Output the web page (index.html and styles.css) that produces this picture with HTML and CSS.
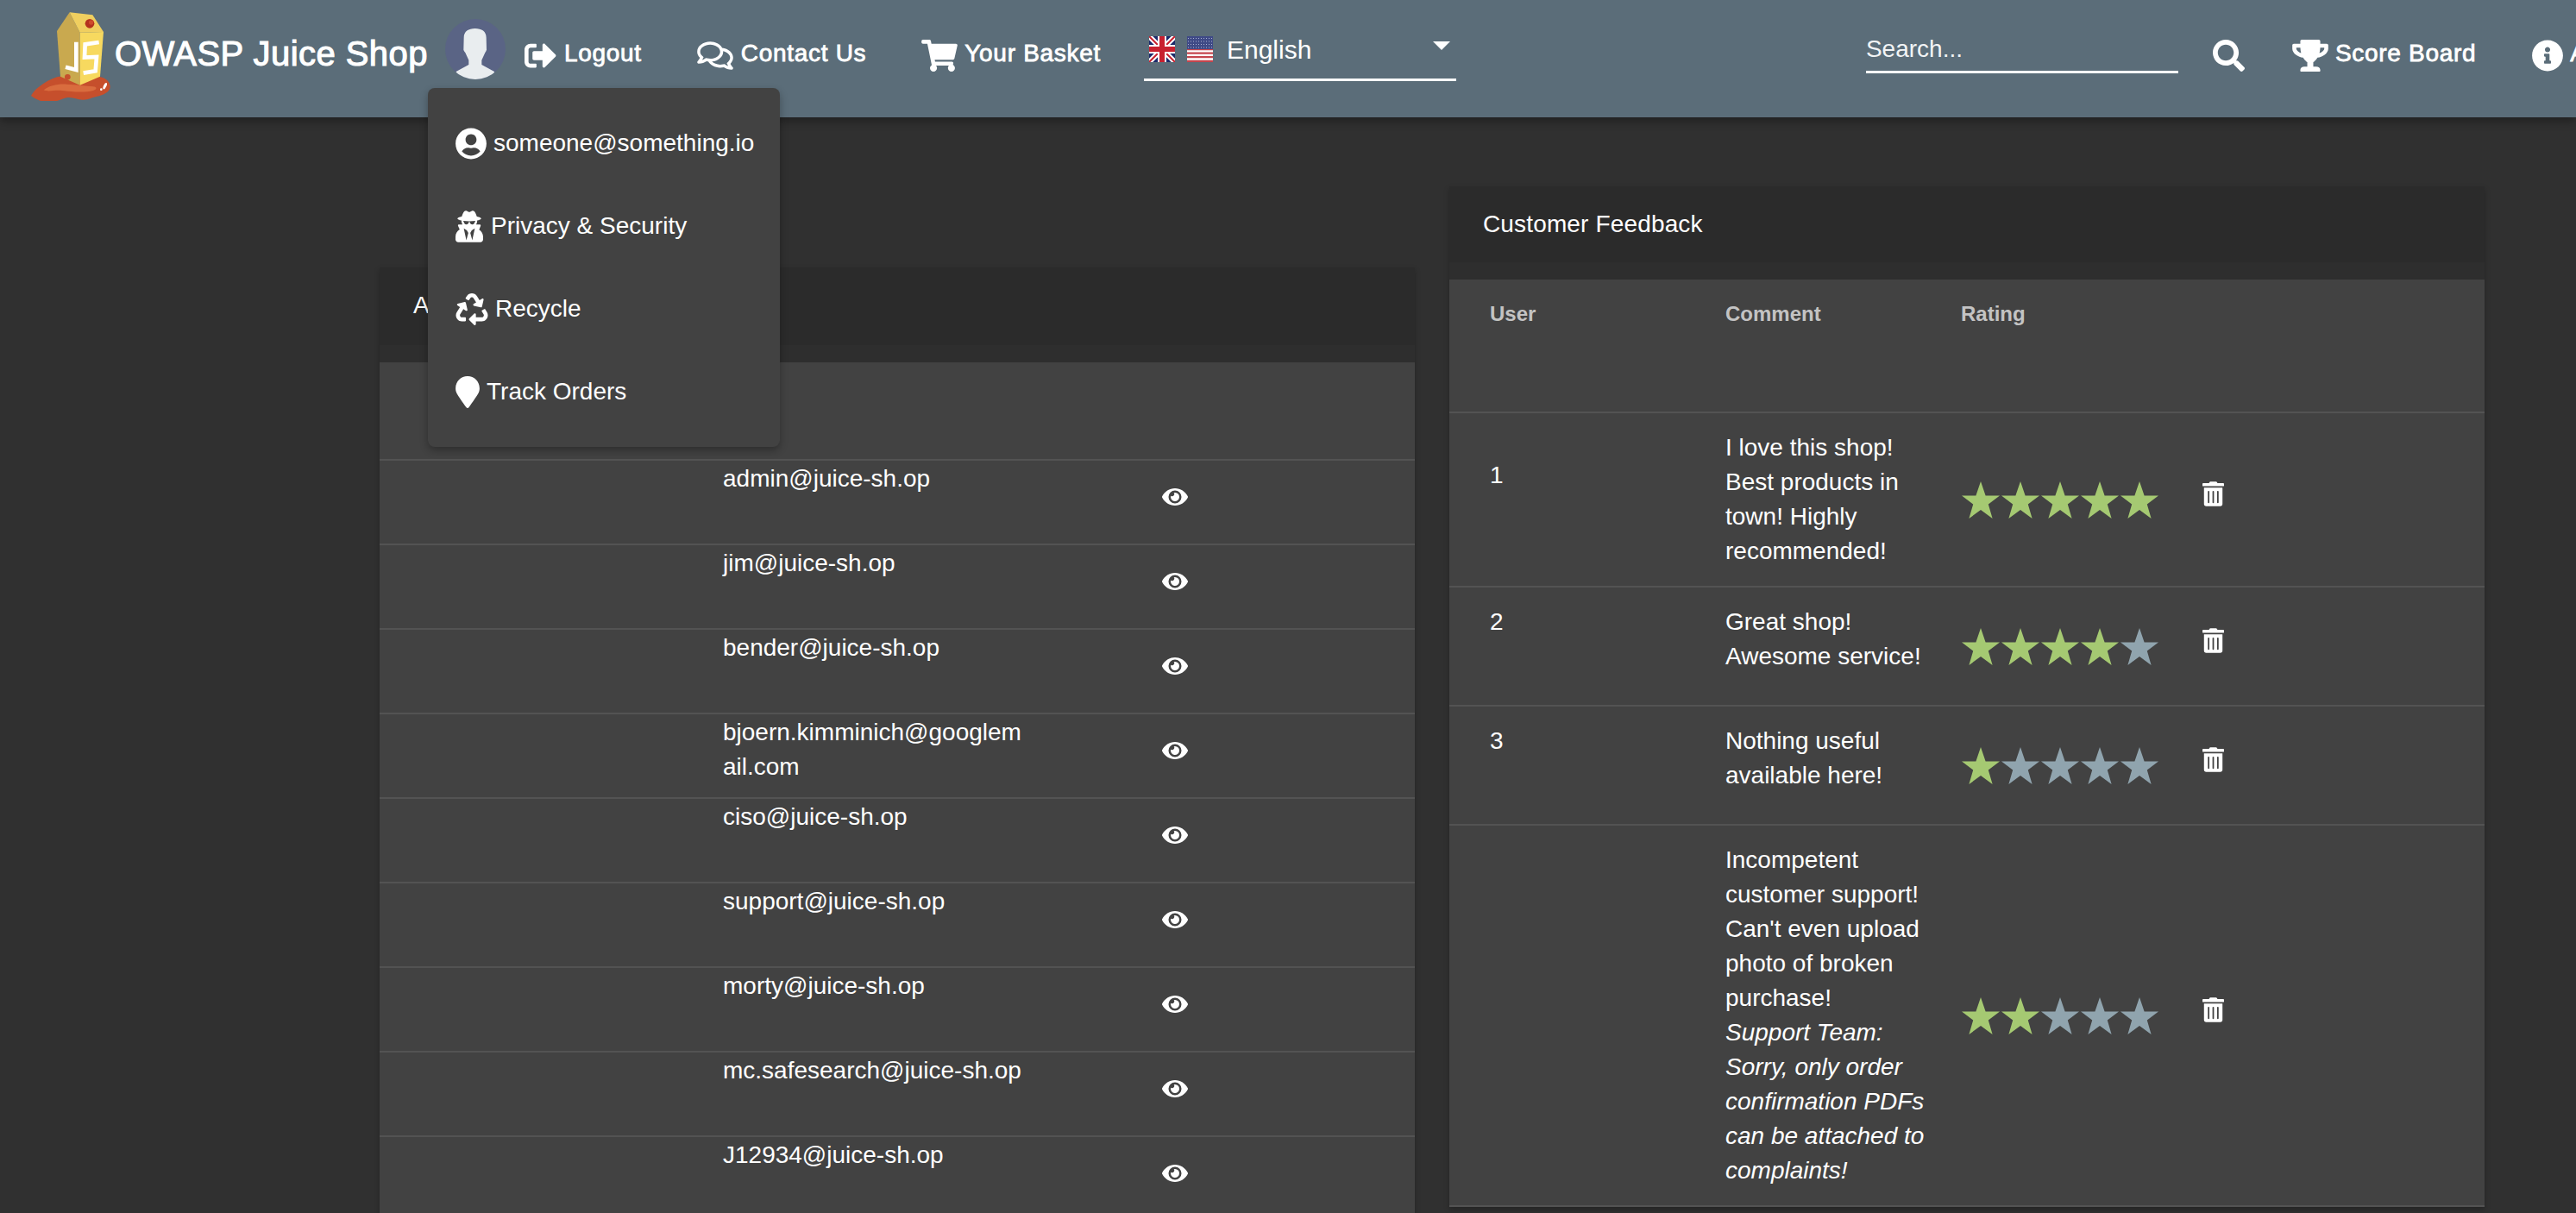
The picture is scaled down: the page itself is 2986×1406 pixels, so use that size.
FILE: index.html
```html
<!DOCTYPE html>
<html lang="en">
<head>
<meta charset="utf-8">
<title>OWASP Juice Shop</title>
<link rel="stylesheet" href="styles.css">
</head>
<body>
<svg class="defs" aria-hidden="true">
  <symbol id="i-logout" viewBox="0 0 512 512"><path d="M497 273L329 441c-15 15-41 4.5-41-17v-96H152c-13.3 0-24-10.7-24-24v-96c0-13.3 10.7-24 24-24h136V88c0-21.4 25.9-32 41-17l168 168c9.3 9.4 9.3 24.6 0 34zM192 436v-40c0-6.6-5.4-12-12-12H96c-17.7 0-32-14.3-32-32V160c0-17.7 14.3-32 32-32h84c6.6 0 12-5.4 12-12V76c0-6.6-5.4-12-12-12H96c-53 0-96 43-96 96v192c0 53 43 96 96 96h84c6.6 0 12-5.4 12-12z"/></symbol>
  <symbol id="i-comments" viewBox="0 0 576 512"><path d="M532 386.2c27.5-27.1 44-61.1 44-98.2 0-80-76.5-146.1-176.2-157.9C368.3 72.5 294.3 32 208 32 93.1 32 0 103.6 0 192c0 37 16.5 71 44 98.2-15.3 30.7-37.3 54.5-37.7 54.9-6.3 6.7-8.1 16.5-4.4 25 3.6 8.5 12 14 21.2 14 53.5 0 96.7-20.2 125.2-38.8 9.2 2.1 18.7 3.7 28.4 4.9C208.1 407.6 281.8 448 368 448c20.8 0 40.8-2.4 59.8-6.8C456.3 459.7 499.4 480 553 480c9.2 0 17.5-5.5 21.2-14 3.6-8.5 1.9-18.3-4.4-25-.4-.3-22.5-24.1-37.8-54.8zm-392.8-92.3L122.1 305c-14.1 9.1-28.5 16.3-43.1 21.4 2.7-4.7 5.4-9.7 8-14.8l15.5-31.1L77.7 256C64.2 242.6 48 220.7 48 192c0-60.7 73.3-112 160-112s160 51.3 160 112-73.3 112-160 112c-16.5 0-33-1.9-49-5.6l-19.8-4.5zM498.3 352l-24.7 24.4 15.5 31.1c2.6 5.1 5.3 10.1 8 14.8-14.6-5.1-29-12.3-43.1-21.4l-17.1-11.1-19.9 4.6c-16 3.7-32.5 5.6-49 5.6-54 0-102.2-20.1-131.3-49.7C338 339.5 416 272.9 416 192c0-3.4-.4-6.7-.7-10C479.7 196.5 528 238.8 528 288c0 28.7-16.2 50.6-29.7 64z"/></symbol>
  <symbol id="i-cart" viewBox="0 0 576 512"><path d="M528.12 301.319l47.273-208C578.806 78.301 567.391 64 551.99 64H159.208l-9.166-44.81C147.758 8.021 137.93 0 126.529 0H24C10.745 0 0 10.745 0 24v16c0 13.255 10.745 24 24 24h69.883l70.248 343.435C147.325 417.1 136 435.222 136 456c0 30.928 25.072 56 56 56s56-25.072 56-56c0-15.674-6.447-29.835-16.824-40h209.647C430.447 426.165 424 440.326 424 456c0 30.928 25.072 56 56 56s56-25.072 56-56c0-22.172-12.888-41.332-31.579-50.405l5.517-24.276c3.413-15.018-8.002-29.319-23.403-29.319H218.117l-6.545-32h293.145c11.206 0 20.92-7.754 23.403-18.681z"/></symbol>
  <symbol id="i-search" viewBox="0 0 512 512"><path d="M505 442.7L405.3 343c-4.5-4.5-10.6-7-17-7H372c27.6-35.3 44-79.7 44-128C416 93.1 322.9 0 208 0S0 93.1 0 208s93.1 208 208 208c48.3 0 92.7-16.4 128-44v16.3c0 6.4 2.5 12.5 7 17l99.7 99.7c9.4 9.4 24.6 9.4 33.9 0l28.3-28.3c9.4-9.4 9.4-24.6.1-34zM208 336c-70.7 0-128-57.2-128-128 0-70.7 57.2-128 128-128 70.7 0 128 57.2 128 128 0 70.7-57.2 128-128 128z"/></symbol>
  <symbol id="i-trophy" viewBox="0 0 576 512"><path d="M552 64H448V24c0-13.3-10.7-24-24-24H152c-13.3 0-24 10.7-24 24v40H24C10.7 64 0 74.7 0 88v56c0 35.7 22.5 72.4 61.9 100.7 31.5 22.7 69.8 37.1 110 41.7C203.3 338.5 240 360 240 360v72h-48c-35.3 0-64 20.7-64 56v12c0 6.6 5.4 12 12 12h296c6.6 0 12-5.4 12-12v-12c0-35.3-28.7-56-64-56h-48v-72s36.7-21.5 68.1-73.6c40.3-4.6 78.7-19 110-41.7 39.3-28.3 61.9-65 61.9-100.7V88c0-13.3-10.7-24-24-24zM99.3 192.8C74.9 175.2 64 155.6 64 144v-16h64.2c1 32.6 5.8 61.2 12.8 86.2-15.1-5.2-29.2-12.4-41.7-21.4zM512 144c0 16.1-17.7 36.1-35.3 48.8-12.5 9-26.7 16.2-41.8 21.4 7-25 11.8-53.6 12.8-86.2H512v16z"/></symbol>
  <symbol id="i-info" viewBox="0 0 512 512"><path d="M256 8C119.043 8 8 119.083 8 256c0 136.997 111.043 248 248 248s248-111.003 248-248C504 119.083 392.957 8 256 8zm0 110c23.196 0 42 18.804 42 42s-18.804 42-42 42-42-18.804-42-42 18.804-42 42-42zm56 254c0 6.627-5.373 12-12 12h-88c-6.627 0-12-5.373-12-12v-24c0-6.627 5.373-12 12-12h12v-64h-12c-6.627 0-12-5.373-12-12v-24c0-6.627 5.373-12 12-12h64c6.627 0 12 5.373 12 12v100h12c6.627 0 12 5.373 12 12v24z"/></symbol>
  <symbol id="i-user" viewBox="0 0 496 512"><path d="M248 8C111 8 0 119 0 256s111 248 248 248 248-111 248-248S385 8 248 8zm0 96c48.6 0 88 39.4 88 88s-39.4 88-88 88-88-39.4-88-88 39.4-88 88-88zm0 344c-58.7 0-111.3-26.6-146.5-68.2 18.8-35.4 55.6-59.8 98.5-59.8 2.4 0 4.8.4 7.1 1.1 13 4.2 26.6 6.9 40.9 6.9 14.3 0 28-2.7 40.9-6.9 2.3-.7 4.7-1.1 7.1-1.1 42.9 0 79.7 24.4 98.5 59.8C359.3 421.4 306.7 448 248 448z"/></symbol>
  <symbol id="i-secret" viewBox="0 0 448 512"><path d="M383.9 308.3l23.9-62.6c4-10.5-3.7-21.7-15-21.7h-58.5c11-18.9 17.8-40.6 17.8-64v-.3c39.2-7.8 64-19.1 64-31.7 0-13.3-27.3-25.1-70.1-33-9.2-32.8-27-65.8-40.6-82.8-9.5-11.9-25.9-15.6-39.5-8.8l-27.6 13.8c-9 4.5-19.6 4.5-28.6 0L182.1 3.4c-13.6-6.8-30-3.1-39.5 8.8-13.5 17-31.4 50-40.6 82.8-42.7 7.9-70 19.7-70 33 0 12.6 24.8 23.9 64 31.7v.3c0 23.4 6.8 45.1 17.8 64H56.3c-11.5 0-19.2 11.7-14.7 22.3l25.8 60.2C27.3 329.8 0 372.7 0 422.4v44.8C0 491.9 20.1 512 44.8 512h358.4c24.7 0 44.8-20.1 44.8-44.8v-44.8c0-48.4-25.8-90.4-64.1-114.1zM176 480l-41.6-192 49.6 32 24 40-32 120zm96 0l-32-120 24-40 49.6-32L272 480zm41.7-298.5c-3.9 11.9-7 24.6-16.5 33.4-10.1 9.3-48 22.4-64-25-2.8-8.4-15.4-8.4-18.3 0-17 50.2-56 32.4-64 25-9.5-8.8-12.7-21.5-16.5-33.4-.8-2.5-6.3-5.7-6.3-5.8v-10.8c28.3 3.6 61 5.8 96 5.8s67.7-2.1 96-5.8v10.8c-.1.1-5.6 3.2-6.4 5.8z"/></symbol>
  <symbol id="i-recycle" viewBox="0 0 512 512"><path d="M184.561 261.903c3.232 13.997-12.123 24.635-24.068 17.168l-40.736-25.455-50.867 81.402C55.606 356.273 70.96 384 96.012 384H148c6.627 0 12 5.373 12 12v40c0 6.627-5.373 12-12 12H96.115c-75.334 0-121.302-83.048-81.408-146.88l50.822-81.388-40.725-25.448c-12.081-7.547-8.966-25.961 4.879-29.158l110.237-25.45c8.611-1.988 17.201 3.381 19.189 11.99l25.452 110.237zm98.561-182.915l41.289 66.076-40.74 25.457c-12.051 7.528-9 25.953 4.879 29.158l110.237 25.45c8.672 1.999 17.215-3.438 19.189-11.99l25.45-110.237c3.197-13.844-11.99-24.719-24.068-17.168l-40.687 25.424-41.263-66.082c-37.521-60.033-125.209-60.171-162.816 0l-17.963 28.766c-3.51 5.62-1.8 13.021 3.82 16.533l33.919 21.195c5.62 3.512 13.024 1.803 16.536-3.817l17.961-28.743c12.712-20.341 41.973-19.676 54.257-.022zM497.288 301.12l-27.515-44.065c-3.511-5.623-10.916-7.334-16.538-3.821l-33.861 21.159c-5.62 3.512-7.33 10.915-3.818 16.536l27.564 44.112c13.257 21.211-2.057 48.96-27.136 48.96H320V336.02c0-14.213-17.242-21.383-27.313-11.313l-80 79.981c-6.249 6.248-6.249 16.379 0 22.627l80 79.989C302.689 517.308 320 510.3 320 495.989V448h95.88c75.274 0 121.335-82.997 81.408-146.88z"/></symbol>
  <symbol id="i-marker" viewBox="0 0 384 512"><path d="M172.268 501.67C26.97 291.031 0 269.413 0 192 0 85.961 85.961 0 192 0s192 85.961 192 192c0 77.413-26.97 99.031-172.268 309.67-9.535 13.774-29.93 13.773-39.464 0z"/></symbol>
  <symbol id="i-eye" viewBox="0 64 576 384"><path d="M572.52 241.4C518.29 135.59 410.93 64 288 64S57.68 135.64 3.48 241.41a32.35 32.35 0 0 0 0 29.19C57.71 376.41 165.07 448 288 448s230.32-71.64 284.52-177.41a32.35 32.35 0 0 0 0-29.19zM288 400a144 144 0 1 1 144-144 143.93 143.93 0 0 1-144 144zm0-240a95.31 95.31 0 0 0-25.31 3.79 47.85 47.85 0 0 1-66.9 66.9A95.78 95.78 0 1 0 288 160z"/></symbol>
  <symbol id="i-trash" viewBox="0 0 448 512"><path d="M32 464a48 48 0 0 0 48 48h288a48 48 0 0 0 48-48V128H32zm272-256a16 16 0 0 1 32 0v224a16 16 0 0 1-32 0zm-96 0a16 16 0 0 1 32 0v224a16 16 0 0 1-32 0zm-96 0a16 16 0 0 1 32 0v224a16 16 0 0 1-32 0zM432 32H312l-9.4-18.7A24 24 0 0 0 281.1 0H166.8a23.72 23.72 0 0 0-21.4 13.3L136 32H16A16 16 0 0 0 0 48v32a16 16 0 0 0 16 16h416a16 16 0 0 0 16-16V48a16 16 0 0 0-16-16z"/></symbol>
  <symbol id="i-star" viewBox="0 0 44 43"><polygon points="22,0 27.6,16.4 44,16.4 30.8,26.6 35.6,43 22,33 8.4,43 13.2,26.6 0,16.4 16.4,16.4"/></symbol>
</svg>

<header class="toolbar">
  <svg class="logo" viewBox="45 25 285 315" aria-label="OWASP Juice Shop logo">
    <path fill="#c64f2c" d="M48 322c12-24 36-38 58-52 22-12 42-18 62-18l120 4c20 4 36 18 35 36-1 16-22 28-48 33-16 3-28 12-48 11-20-1-32-10-52-8-18 2-32 14-54 15-24 1-42 2-73-21z"/>
    <path fill="#d96c3e" d="M92 302c20-16 50-22 80-20 34 2 66 6 92 8 14 1 14 10 0 14-30 8-76 4-108 0-26-3-48 6-64-2z"/>
    <path fill="#c9a94f" d="M138 97L182 32 218 102V285L150 255z"/>
    <path fill="#f0cf5f" d="M182 32L262 41 300 100 218 102z"/>
    <path fill="#f7d95f" d="M218 102L300 100 288 255 218 285z"/>
    <circle cx="252" cy="71" r="16" fill="#b4321e"/>
    <circle cx="257" cy="67" r="8" fill="#cf4b2c"/>
    <path fill="none" stroke="#fff" stroke-width="14" d="M205 135V232L168 222"/>
    <path fill="none" stroke="#fff" stroke-width="14" d="M284 136L236 143 234 189 276 187 272 236 230 243"/>
    <circle cx="175" cy="257" r="10" fill="#c64f2c"/>
    <ellipse cx="305" cy="288" rx="5" ry="12" fill="#fff" transform="rotate(25 305 288)"/>
    <circle cx="292" cy="300" r="4" fill="#fff"/>
  </svg>
  <span class="brand">OWASP Juice Shop</span>
  <svg class="avatar" viewBox="48 35 210 210" aria-label="User avatar">
    <defs><clipPath id="avatar-clip"><circle cx="153" cy="140" r="105"/></clipPath></defs>
    <circle cx="153" cy="140" r="105" fill="#5a6485"/>
    <path clip-path="url(#avatar-clip)" fill="#e9edef" d="M113 100c0-22 16-32 39-32s39 10 39 32l1 42c-2 6-4 8-5 10l-12 26v16l44 24v40H86v-40l44-24v-16l-12-26c-1-2-5-6-6-10z"/>
  </svg>
  <a class="nav nav-logout"><svg class="ico ico-logout"><use href="#i-logout"/></svg><span>Logout</span></a>
  <a class="nav nav-contact"><svg class="ico ico-wide"><use href="#i-comments"/></svg><span>Contact Us</span></a>
  <a class="nav nav-basket"><svg class="ico ico-wide"><use href="#i-cart"/></svg><span>Your Basket</span></a>
  <div class="lang">
    <svg class="flag" viewBox="0 0 30 30" aria-label="UK flag">
      <rect width="30" height="30" fill="#1c2a6b"/>
      <path d="M0 0L30 30M30 0L0 30" stroke="#fff" stroke-width="6"/>
      <path d="M0 0L30 30M30 0L0 30" stroke="#c8202f" stroke-width="2"/>
      <path d="M15 0V30M0 15H30" stroke="#fff" stroke-width="10"/>
      <path d="M15 0V30M0 15H30" stroke="#c8202f" stroke-width="6"/>
    </svg>
    <svg class="flag" viewBox="0 0 30 30" aria-label="US flag">
      <rect width="30" height="30" fill="#fff"/>
      <path d="M0 1.2H30M0 5.8H30M0 10.4H30M0 15H30M0 19.6H30M0 24.2H30M0 28.8H30" stroke="#c5454d" stroke-width="2.3"/>
      <rect width="30" height="15" fill="#3f4a86"/>
      <path d="M1 2.5H29M1 6H29M1 9.5H29M1 13H29" stroke="#aab0d0" stroke-width="1" stroke-dasharray="1 2"/>
    </svg>
    <span class="lang-name">English</span>
    <span class="lang-arrow"></span>
  </div>
  <div class="search"><span>Search...</span></div>
  <svg class="ico ico-search"><use href="#i-search"/></svg>
  <a class="nav nav-score"><svg class="ico ico-wide"><use href="#i-trophy"/></svg><span>Score Board</span></a>
  <a class="nav nav-about"><svg class="ico ico-info"><use href="#i-info"/></svg><span>About Us</span></a>
</header>

<main class="content">
  <section class="card card-users">
    <h2 class="card-title">A</h2>
    <div class="card-body">
      <div class="users-head"></div>
      <div class="user-row"><span class="user-email">admin@juice-sh.op</span><svg class="eye"><use href="#i-eye"/></svg></div>
      <div class="user-row"><span class="user-email">jim@juice-sh.op</span><svg class="eye"><use href="#i-eye"/></svg></div>
      <div class="user-row"><span class="user-email">bender@juice-sh.op</span><svg class="eye"><use href="#i-eye"/></svg></div>
      <div class="user-row"><span class="user-email">bjoern.kimminich@googlemail.com</span><svg class="eye"><use href="#i-eye"/></svg></div>
      <div class="user-row"><span class="user-email">ciso@juice-sh.op</span><svg class="eye"><use href="#i-eye"/></svg></div>
      <div class="user-row"><span class="user-email">support@juice-sh.op</span><svg class="eye"><use href="#i-eye"/></svg></div>
      <div class="user-row"><span class="user-email">morty@juice-sh.op</span><svg class="eye"><use href="#i-eye"/></svg></div>
      <div class="user-row"><span class="user-email">mc.safesearch@juice-sh.op</span><svg class="eye"><use href="#i-eye"/></svg></div>
      <div class="user-row"><span class="user-email">J12934@juice-sh.op</span><svg class="eye"><use href="#i-eye"/></svg></div>
    </div>
  </section>

  <section class="card card-feedback">
    <h2 class="card-title">Customer Feedback</h2>
    <div class="card-body">
      <table class="fb">
        <thead>
          <tr><th class="c-user">User</th><th class="c-comment">Comment</th><th class="c-rating">Rating</th><th></th></tr>
        </thead>
        <tbody>
          <tr>
            <td class="c-user">1</td>
            <td class="c-comment">I love this shop! Best products in town! Highly recommended!</td>
            <td class="c-rating"><div class="stars"><svg class="star on"><use href="#i-star"/></svg><svg class="star on"><use href="#i-star"/></svg><svg class="star on"><use href="#i-star"/></svg><svg class="star on"><use href="#i-star"/></svg><svg class="star on"><use href="#i-star"/></svg></div></td>
            <td class="c-action"><svg class="trash"><use href="#i-trash"/></svg></td>
          </tr>
          <tr>
            <td class="c-user">2</td>
            <td class="c-comment">Great shop! Awesome service!</td>
            <td class="c-rating"><div class="stars"><svg class="star on"><use href="#i-star"/></svg><svg class="star on"><use href="#i-star"/></svg><svg class="star on"><use href="#i-star"/></svg><svg class="star on"><use href="#i-star"/></svg><svg class="star"><use href="#i-star"/></svg></div></td>
            <td class="c-action"><svg class="trash"><use href="#i-trash"/></svg></td>
          </tr>
          <tr>
            <td class="c-user">3</td>
            <td class="c-comment">Nothing useful available here!</td>
            <td class="c-rating"><div class="stars"><svg class="star on"><use href="#i-star"/></svg><svg class="star"><use href="#i-star"/></svg><svg class="star"><use href="#i-star"/></svg><svg class="star"><use href="#i-star"/></svg><svg class="star"><use href="#i-star"/></svg></div></td>
            <td class="c-action"><svg class="trash"><use href="#i-trash"/></svg></td>
          </tr>
          <tr>
            <td class="c-user"></td>
            <td class="c-comment">Incompetent customer support! Can't even upload photo of broken purchase!<br><em>Support Team: Sorry, only order confirmation PDFs can be attached to complaints!</em></td>
            <td class="c-rating"><div class="stars"><svg class="star on"><use href="#i-star"/></svg><svg class="star on"><use href="#i-star"/></svg><svg class="star"><use href="#i-star"/></svg><svg class="star"><use href="#i-star"/></svg><svg class="star"><use href="#i-star"/></svg></div></td>
            <td class="c-action"><svg class="trash"><use href="#i-trash"/></svg></td>
          </tr>
        </tbody>
      </table>
    </div>
  </section>
</main>

<nav class="menu">
  <a class="menu-item"><svg class="mi mi-user"><use href="#i-user"/></svg><span>someone@something.io</span></a>
  <a class="menu-item"><svg class="mi mi-secret"><use href="#i-secret"/></svg><span>Privacy &amp; Security</span></a>
  <a class="menu-item"><svg class="mi mi-recycle"><use href="#i-recycle"/></svg><span>Recycle</span></a>
  <a class="menu-item"><svg class="mi mi-marker"><use href="#i-marker"/></svg><span>Track Orders</span></a>
</nav>
</body>
</html>
```
FILE: styles.css
```css
* { box-sizing: border-box; }
html, body { margin: 0; height: 1406px; overflow: hidden; }
body {
  position: relative;
  background: #303030;
  color: #fff;
  font-family: "Liberation Sans", Arial, sans-serif;
  font-size: 28px;
  line-height: 40px;
}
.defs { position: absolute; width: 0; height: 0; }
svg { fill: #fff; display: block; flex: none; }

.toolbar {
  position: relative;
  z-index: 2;
  display: flex;
  align-items: center;
  height: 136px;
  width: 2986px;
  padding: 0 0 8px 35px;
  background: #5b6d79;
  box-shadow: 0 4px 10px rgba(0, 0, 0, .35);
  white-space: nowrap;
}
.toolbar > * { flex: none; }
.logo { width: 95px; height: 105px; }
.brand {
  margin-left: 3px;
  margin-top: -4px;
  font-size: 40px;
  letter-spacing: .45px;
  -webkit-text-stroke: 1.1px #fff;
}
.avatar { width: 70px; height: 70px; margin-left: 20px; margin-top: -14px; }

.nav { display: flex; align-items: center; letter-spacing: .7px; -webkit-text-stroke: .8px #fff; }
.nav span { margin-top: -4px; }
.ico { height: 37px; }
.ico-wide { width: 42px; }
.ico-logout { width: 37px; margin-right: 9px; }
.ico-info { width: 38px; margin-right: 7px; }
.nav-logout { margin-left: 22px; }
.nav-contact { margin-left: 64px; gap: 9px; }
.nav-basket { margin-left: 64px; gap: 8px; }
.nav-score { margin-left: 54px; gap: 8px; }
.nav-about { margin-left: 64px; }

.lang {
  display: flex;
  align-items: flex-start;
  align-self: flex-start;
  width: 362px;
  height: 94px;
  margin-left: 50px;
  padding: 42px 7px 0 6px;
  border-bottom: 3px solid #fff;
  font-size: 30px;
}
.flag { width: 30px; height: 30px; margin-right: 14px; }
.lang-name { margin-left: 2px; line-height: 32px; }
.lang-arrow {
  margin-left: auto;
  margin-top: 6px;
  border-left: 10px solid transparent;
  border-right: 10px solid transparent;
  border-top: 10px solid #fff;
}
.search {
  align-self: flex-start;
  width: 362px;
  height: 85px;
  margin-left: 475px;
  padding-top: 41px;
  border-bottom: 3px solid #fff;
  line-height: 32px;
  color: #f2f4f5;
}
.ico-search { width: 39px; margin-left: 39px; }

.content {
  display: flex;
  align-items: flex-start;
  gap: 40px;
  padding-left: 440px;
}
.card {
  width: 1200px;
  flex: none;
  background: #2e2e2e;
  box-shadow: 0 3px 6px rgba(0, 0, 0, .25);
}
.card-users { margin-top: 174px; }
.card-feedback { margin-top: 80px; }
.card-title {
  margin: 0;
  height: 88px;
  padding: 24px 39px 0;
  background: #2b2b2b;
  font-size: 28px;
  font-weight: normal;
  line-height: 40px;
  letter-spacing: .15px;
}
.card-users .card-title { height: 90px; }
.card-body { margin-top: 20px; background: #424242; }

.users-head { height: 114px; border-bottom: 2px solid #535353; }
.user-row {
  display: flex;
  align-items: flex-start;
  height: 98px;
  padding-left: 398px;
  border-bottom: 2px solid #535353;
}
.user-email { width: 350px; word-break: break-all; padding-top: 1px; }
.eye { width: 30px; height: 20px; margin-left: 159px; margin-top: 32px; }

.fb { width: 1200px; table-layout: fixed; border-collapse: collapse; }
.fb th, .fb td { padding: 20px 0; border-bottom: 2px solid #535353; text-align: left; vertical-align: middle; font-weight: normal; }
.fb th {
  height: 154px;
  padding: 28px 0 0;
  vertical-align: top;
  font-size: 24px;
  font-weight: bold;
  line-height: 24px;
  color: rgba(255, 255, 255, .7);
}
.fb td { height: 138px; }
.c-user { width: 320px; padding-left: 47px !important; }
.fb td.c-user { padding-bottom: 76px; }
.c-comment { width: 273px; padding-right: 30px !important; }
.fb td.c-comment { vertical-align: top; }
.c-rating { width: 273px; }
.fb td.c-action { padding-bottom: 34px; padding-left: 7px; }
em { font-style: italic; }

.stars { display: flex; gap: 2px; padding-left: 1px; }
.star { width: 44px; height: 43px; fill: #90a4ae; }
.star.on { fill: #a5c972; }
.trash { width: 25px; height: 29px; }

.menu {
  position: absolute;
  z-index: 3;
  left: 496px;
  top: 102px;
  width: 408px;
  padding: 16px 0;
  background: #424242;
  border-radius: 8px;
  box-shadow: 0 4px 10px rgba(0, 0, 0, .3);
}
.menu-item { display: flex; align-items: center; height: 96px; padding-left: 32px; }
.mi { height: 37px; }
.mi-user { width: 36px; margin-right: 8px; }
.mi-secret { width: 32px; margin-right: 9px; }
.mi-recycle { width: 38px; margin-right: 8px; }
.mi-marker { width: 28px; margin-right: 8px; }
```
